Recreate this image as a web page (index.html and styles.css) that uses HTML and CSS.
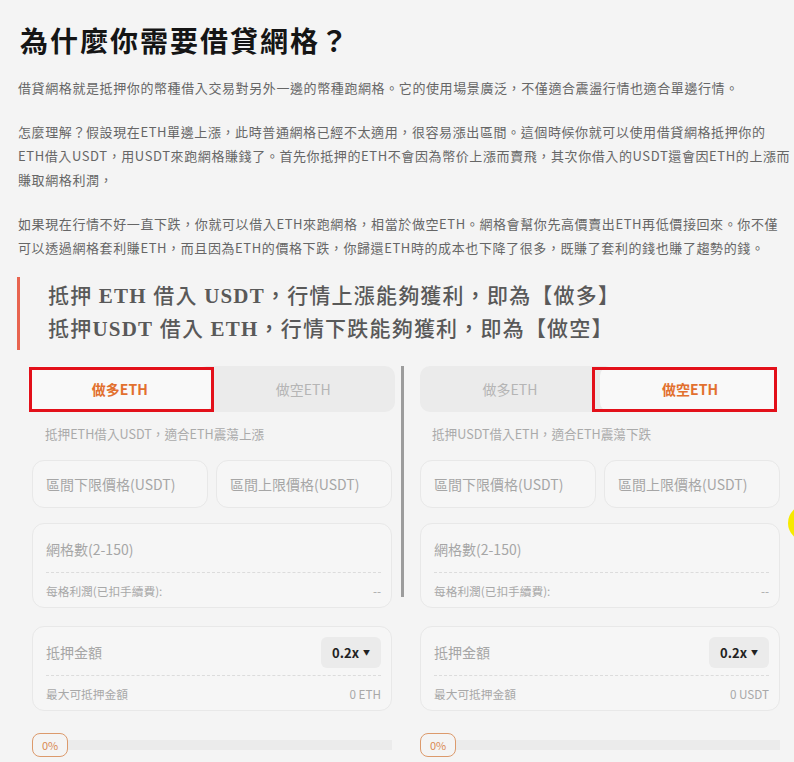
FILE: index.html
```html
<!DOCTYPE html>
<html lang="zh-Hant">
<head>
  <meta charset="UTF-8">
  <title>借貸網格</title>
  <link rel="stylesheet" href="styles.css">
</head>
<body>
  <div class="article">
    <h1 class="title">為什麼你需要借貸網格？</h1>

    <p class="text">借貸網格就是抵押你的幣種借入交易對另外一邊的幣種跑網格。它的使用場景廣泛，不僅適合震盪行情也適合單邊行情。</p>

    <p class="text">怎麼理解？假設現在ETH單邊上漲，此時普通網格已經不太適用，很容易漲出區間。這個時候你就可以使用借貸網格抵押你的<br>ETH借入USDT，用USDT來跑網格賺錢了。首先你抵押的ETH不會因為幣价上漲而賣飛，其次你借入的USDT還會因ETH的上漲而<br>賺取網格利潤，</p>

    <p class="text">如果現在行情不好一直下跌，你就可以借入ETH來跑網格，相當於做空ETH。網格會幫你先高價賣出ETH再低價接回來。你不僅<br>可以透過網格套利賺ETH，而且因為ETH的價格下跌，你歸還ETH時的成本也下降了很多，既賺了套利的錢也賺了趨勢的錢。</p>

    <div class="quote">
      <div>抵押 <b>ETH</b> 借入 <b>USDT</b>，行情上漲能夠獲利，即為【做多】</div>
      <div>抵押<b>USDT</b> 借入 <b>ETH</b>，行情下跌能夠獲利，即為【做空】</div>
    </div>
  </div>

  <div class="forms">
    <div class="panel panel-left">
      <div class="tabs">
        <div class="tab active">做多ETH<span class="mark"></span></div>
        <div class="tab">做空ETH</div>
      </div>
      <div class="hint">抵押ETH借入USDT，適合ETH震蕩上漲</div>

      <div class="inputs">
        <div class="field">區間下限價格(USDT)</div>
        <div class="field">區間上限價格(USDT)</div>
      </div>

      <div class="box box-grid">
        <div class="box-main">網格數(2-150)</div>
        <div class="box-sub"><span>每格利潤(已扣手續費):</span><span>--</span></div>
      </div>

      <div class="box box-amount">
        <div class="box-main"><span>抵押金額</span><span class="lev">0.2x <i class="caret">▼</i></span></div>
        <div class="box-sub"><span>最大可抵押金額</span><span>0 ETH</span></div>
      </div>

      <div class="progress">
        <span class="pct">0%</span>
        <span class="bar"></span>
      </div>
    </div>

    <div class="divider"></div>

    <div class="panel panel-right">
      <div class="tabs">
        <div class="tab">做多ETH</div>
        <div class="tab active">做空ETH<span class="mark mark-right"></span></div>
      </div>
      <div class="hint">抵押USDT借入ETH，適合ETH震蕩下跌</div>

      <div class="inputs">
        <div class="field">區間下限價格(USDT)</div>
        <div class="field">區間上限價格(USDT)</div>
      </div>

      <div class="box box-grid">
        <div class="box-main">網格數(2-150)</div>
        <div class="box-sub"><span>每格利潤(已扣手續費):</span><span>--</span></div>
      </div>

      <div class="box box-amount">
        <div class="box-main"><span>抵押金額</span><span class="lev">0.2x <i class="caret">▼</i></span></div>
        <div class="box-sub"><span>最大可抵押金額</span><span>0 USDT</span></div>
      </div>

      <div class="progress">
        <span class="pct">0%</span>
        <span class="bar"></span>
      </div>
    </div>
  </div>

  <div class="dot"></div>
</body>
</html>
```

FILE: styles.css
```css
html, body {
  overflow: hidden;
}

body {
  margin: 0;
  background-color: #f4f4f4;
  font-family: "Noto Sans CJK TC", "Noto Sans", sans-serif;
  color: #555;
  position: relative;
}

.article {
  padding: 0 0 0 18px;
}

.title {
  margin: 20px 0 0 2px;
  font-size: 28px;
  line-height: 40px;
  font-weight: 700;
  letter-spacing: 2px;
  color: #151515;
}

.text {
  margin: 16px 0 0;
  font-size: 13px;
  line-height: 24px;
  letter-spacing: 0.6px;
  color: #666;
  white-space: nowrap;
}

.text + .text {
  margin-top: 20px;
}

.quote {
  margin: 17px 0 0 -1px;
  padding: 3px 0 4px 28px;
  border-left: 3px solid #e8644f;
  font-family: "Liberation Serif", "Noto Sans CJK TC", serif;
  font-size: 21px;
  line-height: 33px;
  font-weight: 500;
  letter-spacing: 1.2px;
  color: #595959;
}

.quote b {
  font-weight: 700;
}

.forms {
  display: flex;
  margin: 16px 0 0 28px;
}

.panel-left {
  width: 367px;
}

.panel-right {
  width: 364px;
}

.divider {
  width: 3px;
  height: 231px;
  margin: 0 14px 0 6px;
  background: #9c9c9c;
}

.tabs {
  display: flex;
  height: 46px;
  background: #ebebeb;
  border-radius: 10px;
}

.panel-right .tabs,
.panel-right .inputs,
.panel-right .box,
.panel-right .progress {
  margin-left: 2px;
  margin-right: 2px;
}

.panel-left .inputs,
.panel-left .box,
.panel-left .progress {
  margin-left: 4px;
  margin-right: 3px;
}

.tab {
  flex: 1;
  position: relative;
  display: flex;
  align-items: center;
  justify-content: center;
  font-size: 14px;
  color: #b5b5b5;
  border-radius: 10px;
}

.tab.active {
  background: #f9f9f9;
  color: #e2702e;
  font-weight: 700;
}

.mark {
  position: absolute;
  top: 1px;
  bottom: 0;
  left: 1px;
  right: -2px;
  border: 3px solid #e3101a;
}

.mark.mark-right {
  left: -8px;
  right: 3px;
}

.hint {
  margin-top: 12px;
  padding-left: 17px;
  font-size: 12.6px;
  line-height: 20px;
  color: #aaa;
}

.panel-right .hint {
  padding-left: 14px;
}

.inputs {
  display: flex;
  gap: 8px;
  margin-top: 16px;
}

.field {
  flex: 1;
  height: 46px;
  display: flex;
  align-items: center;
  padding-left: 13px;
  border: 1px solid #e8e8e8;
  border-radius: 12px;
  background: #f6f6f6;
  font-size: 14px;
  color: #a6a6a6;
}

.box {
  margin-top: 15px;
  padding: 0 10px 0 13px;
  border: 1px solid #e8e8e8;
  border-radius: 12px;
  background: #f6f6f6;
}

.box-amount {
  margin-top: 18px;
}

.box-main {
  height: 46px;
  padding-top: 2px;
  display: flex;
  align-items: center;
  justify-content: space-between;
  border-bottom: 1px dashed #dcdcdc;
  font-size: 14px;
  color: #a6a6a6;
}

.box-sub {
  height: 34px;
  display: flex;
  align-items: center;
  justify-content: space-between;
  font-size: 11.7px;
  color: #a8a8a8;
}

.lev {
  width: 60px;
  height: 31px;
  display: flex;
  align-items: center;
  justify-content: center;
  gap: 4px;
  background: #ebebeb;
  border-radius: 6px;
  font-size: 13px;
  font-weight: 700;
  color: #222;
}

.caret {
  font-style: normal;
  font-size: 7px;
}

.progress {
  display: flex;
  align-items: center;
  margin-top: 22px;
}

.pct {
  width: 36px;
  height: 24px;
  box-sizing: border-box;
  display: flex;
  align-items: center;
  justify-content: center;
  border: 1.5px solid #dc9a6c;
  border-radius: 8px;
  font-size: 11px;
  color: #d98a55;
}

.bar {
  flex: 1;
  height: 10px;
  background: #ebebeb;
}

.dot {
  position: absolute;
  left: 788px;
  top: 505px;
  width: 36px;
  height: 36px;
  border-radius: 50%;
  background: #f7ea00;
}
```
